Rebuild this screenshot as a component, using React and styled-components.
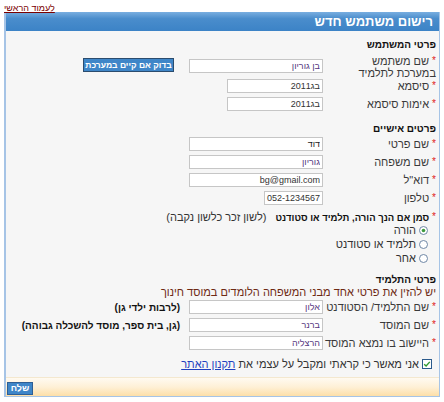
import React from 'react';
import styled, { createGlobalStyle } from 'styled-components';

const Global = createGlobalStyle`
  html, body { margin: 0; padding: 0; background: #fff; }
  body { font-family: "Liberation Sans", Arial, sans-serif; font-size: 11px; color: #222; }
  * { box-sizing: border-box; }
`;

const Page = styled.div`
  width: 444px;
  height: 402px;
  overflow: hidden;
  padding: 0 4px;
`;

const TopBar = styled.div`
  height: 12px;
  padding-top: 1px;
`;

const HomeLink = styled.a`
  font-size: 9px;
  line-height: 10px;
  color: #7a0000;
  text-decoration: underline;
  direction: rtl;
`;

const Panel = styled.section`
  width: 436px;
  border: 1px solid #a6c4e6;
  border-left-width: 2px;
  border-top: 0;
`;

const Header = styled.h1`
  margin: 0;
  height: 19px;
  line-height: 19px;
  background: linear-gradient(#79aee0 0%, #4a8dcc 35%, #3c83c6 100%);
  color: #fff;
  font-size: 13px;
  font-weight: bold;
  direction: rtl;
  padding-right: 6px;
`;

const Body = styled.div`
  background: #f6f6f6;
  direction: rtl;
  padding: 7px 3px 4px 3px;
`;

const SectionTitle = styled.h2`
  margin: ${(p) => p.$mt || 0}px 0 0;
  font-size: 10px;
  font-weight: bold;
  line-height: 13px;
  color: #111;
`;

const Row = styled.div`
  display: flex;
  align-items: ${(p) => (p.$top ? 'flex-start' : 'center')};
  height: ${(p) => p.$h || 18}px;
  margin-top: ${(p) => p.$mt || 0}px;
`;

const Label = styled.div`
  width: 113px;
  flex: none;
  line-height: 12px;
  color: #3a3a3a;
  white-space: nowrap;
`;

const Star = styled.span`
  color: #e02020;
  font-size: 10px;
  font-weight: normal;
  margin-left: 3px;
  vertical-align: 1px;
`;

const Field = styled.div`
  width: 134px;
  flex: none;
  display: flex;
`;

const Input = styled.input`
  width: ${(p) => p.$w || 134}px;
  height: 14px;
  margin-top: ${(p) => p.$mt || 0}px;
  border: 1px solid #c6c6c6;
  background: #fff;
  font: 9px "Liberation Sans", Arial, sans-serif;
  color: ${(p) => p.$c || '#333'};
  padding: 0 2px 0 1px;
  text-align: right;
  direction: rtl;
  outline: none;
`;

const CheckButton = styled.button`
  margin-right: 15px;
  margin-top: 3px;
  width: 91px;
  height: 14px;
  padding: 0;
  background: #3f86c8;
  border: 1px solid #2b4c6e;
  color: #fff;
  font: bold 8.5px "Liberation Sans", Arial, sans-serif;
  line-height: 12px;
  white-space: nowrap;
  direction: rtl;
`;

const Aside = styled.div`
  margin-right: 9px;
  font-weight: bold;
  font-size: 10px;
  color: #111;
  white-space: nowrap;
`;

const Question = styled.div`
  display: flex;
  align-items: baseline;
  line-height: 10px;
  margin-top: 5px;
  white-space: nowrap;
`;

const QText = styled.span`
  font-weight: bold;
  font-size: 9.5px;
  color: #111;
`;

const QHint = styled.span`
  margin-right: 9px;
  color: #333;
`;

const RadioList = styled.div`
  padding-right: 8px;
`;

const RadioRow = styled.label`
  display: flex;
  align-items: center;
  gap: 3px;
  height: 14px;
  color: #333;
`;

const Note = styled.div`
  line-height: 12px;
  color: #6e2a14;
  white-space: nowrap;
`;

const AgreeRow = styled.label`
  display: flex;
  align-items: center;
  gap: 3px;
  height: 18px;
  margin-top: 3px;
  padding-right: 4px;
  color: #333;
`;

const TermsLink = styled.a`
  color: #1f3fbf;
  text-decoration: underline;
`;

const Footer = styled.div`
  height: 19px;
  background: linear-gradient(#fffaf1 0%, #fef0d6 50%, #fddfa8 100%);
  border-top: 1px solid #f4e8cf;
  display: flex;
  align-items: flex-start;
  padding: 4px 0 0 1px;
`;

const SendButton = styled.button`
  width: 26px;
  height: 13px;
  padding: 0;
  background: #3f86c8;
  border: 1px solid #2f5f94;
  color: #fff;
  font: bold 9px "Liberation Sans", Arial, sans-serif;
  line-height: 11px;
  direction: rtl;
`;

const RadioIcon = ({ checked }) => (
  <svg width="9" height="9" viewBox="0 0 9 9">
    <circle cx="4.5" cy="4.5" r="4" fill="#fff" stroke="#6f87a6" strokeWidth="1" />
    {checked && <circle cx="4.5" cy="4.5" r="1.8" fill="#3d9a3d" />}
  </svg>
);

const CheckIcon = () => (
  <svg width="10" height="10" viewBox="0 0 10 10">
    <rect x="0.5" y="0.5" width="9" height="9" fill="#fff" stroke="#2c5b8c" />
    <path d="M2.2 5.2 L4.1 7 L7.8 2.9" fill="none" stroke="#2f9a2f" strokeWidth="1.4" />
  </svg>
);

const FormRow = ({ label, children, aside, ...rest }) => (
  <Row {...rest}>
    <Label>
      <Star>*</Star>
      {label}
    </Label>
    <Field>{children}</Field>
    {aside}
  </Row>
);

export default function App() {
  return (
    <Page>
      <Global />
      <TopBar>
        <HomeLink href="#">לעמוד הראשי</HomeLink>
      </TopBar>
      <Panel>
        <Header>רישום משתמש חדש</Header>
        <Body>
          <SectionTitle>פרטי המשתמש</SectionTitle>
          <FormRow
            $top
            $h={22}
            $mt={4}
            label={<>שם משתמש<br />במערכת לתלמיד</>}
            aside={<CheckButton type="button">בדוק אם קיים במערכת</CheckButton>}
          >
            <Input $mt={4} defaultValue="בן גוריון" $c="#54367e" />
          </FormRow>
          <FormRow label="סיסמא">
            <Input $w={96} defaultValue="בג2011" />
          </FormRow>
          <FormRow label="אימות סיסמא">
            <Input $w={96} defaultValue="בג2011" />
          </FormRow>

          <SectionTitle $mt={9}>פרטים אישיים</SectionTitle>
          <FormRow label="שם פרטי">
            <Input defaultValue="דוד" $c="#222" />
          </FormRow>
          <FormRow label="שם משפחה">
            <Input defaultValue="גוריון" $c="#54367e" />
          </FormRow>
          <FormRow label={'דוא"ל'}>
            <Input defaultValue="bg@gmail.com" />
          </FormRow>
          <FormRow label="טלפון">
            <Input $w={59} defaultValue="052-1234567" />
          </FormRow>

          <Question>
            <QText>
              <Star>*</Star>סמן אם הנך הורה, תלמיד או סטודנט
            </QText>
            <QHint>(לשון זכר כלשון נקבה)</QHint>
          </Question>
          <RadioList>
            <RadioRow>
              <RadioIcon checked />
              הורה
            </RadioRow>
            <RadioRow>
              <RadioIcon />
              תלמיד או סטודנט
            </RadioRow>
            <RadioRow>
              <RadioIcon />
              אחר
            </RadioRow>
          </RadioList>

          <SectionTitle $mt={8}>פרטי התלמיד</SectionTitle>
          <Note>יש להזין את פרטי אחד מבני המשפחה הלומדים במוסד חינוך</Note>
          <FormRow label="שם התלמיד/ הסטודנט" aside={<Aside>(לרבות ילדי גן)</Aside>}>
            <Input defaultValue="אלון" $c="#54367e" />
          </FormRow>
          <FormRow label="שם המוסד" aside={<Aside>(גן, בית ספר, מוסד להשכלה גבוהה)</Aside>}>
            <Input defaultValue="ברנר" $c="#54367e" />
          </FormRow>
          <FormRow label="היישוב בו נמצא המוסד">
            <Input defaultValue="הרצליה" $c="#54367e" />
          </FormRow>

          <AgreeRow>
            <CheckIcon />
            <span>
              אני מאשר כי קראתי ומקבל על עצמי את <TermsLink href="#">תקנון האתר</TermsLink>
            </span>
          </AgreeRow>
        </Body>
        <Footer>
          <SendButton type="button">שלח</SendButton>
        </Footer>
      </Panel>
    </Page>
  );
}
